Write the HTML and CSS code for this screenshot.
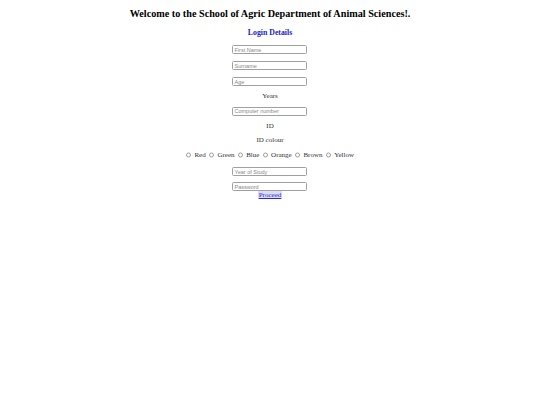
FILE: index.html
```html
<!DOCTYPE html>
<html>
<head>
<meta charset="utf-8">
<link rel="stylesheet" href="styles.css">
</head>
<body>
<div class="page">
  <h2 class="title">Welcome to the School of Agric Department of Animal Sciences!.</h2>
  <h3 class="subtitle">Login Details</h3>
  <form class="form">
    <input class="field f-first" type="text" placeholder="First Name">
    <input class="field f-gap" type="text" placeholder="Surname">
    <input class="field f-gap" type="text" placeholder="Age">
    <p class="label l-years">Years</p>
    <input class="field f-comp" type="text" placeholder="Computer number">
    <p class="label l-id">ID</p>
    <p class="label l-colour">ID colour</p>
    <div class="radios">
      <label class="opt"><input type="radio" name="c" class="radio">Red</label>
      <label class="opt"><input type="radio" name="c" class="radio">Green</label>
      <label class="opt"><input type="radio" name="c" class="radio">Blue</label>
      <label class="opt"><input type="radio" name="c" class="radio">Orange</label>
      <label class="opt"><input type="radio" name="c" class="radio">Brown</label>
      <label class="opt"><input type="radio" name="c" class="radio">Yellow</label>
    </div>
    <input class="field f-year" type="text" placeholder="Year of Study">
    <input class="field f-pass" type="password" placeholder="Password">
    <a class="proceed" href="#">Proceed</a>
  </form>
</div>
</body>
</html>
```

FILE: styles.css
```css
html, body {
  margin: 0;
  padding: 0;
  background: #ffffff;
}
body {
  font-family: "Liberation Serif", "Times New Roman", serif;
  font-size: 7px;
  color: #333;
}
.page {
  display: flex;
  flex-direction: column;
  align-items: center;
}
.title {
  margin: 8px 0 0 0;
  font-size: 10.2px;
  line-height: 12px;
  font-weight: bold;
  color: #000;
}
.subtitle {
  margin: 8px 0 0 0;
  font-size: 7.8px;
  line-height: 10px;
  font-weight: bold;
  color: #1a1acc;
}
.form {
  display: flex;
  flex-direction: column;
  align-items: center;
  margin: 0;
}
.field {
  box-sizing: border-box;
  width: 75px;
  height: 9px;
  margin: 0;
  padding: 0 1px;
  border: 1px solid #a0a0a0;
  border-radius: 1.5px;
  font-family: "Liberation Sans", Arial, sans-serif;
  font-size: 5.5px;
  line-height: 7px;
  outline: none;
  background: #fff;
}
.field::placeholder {
  color: #888;
}
.f-first { margin-top: 7px; }
.f-gap { margin-top: 7px; }
.f-comp { margin-top: 6.5px; }
.f-year { margin-top: 8px; }
.f-pass { margin-top: 6px; }
.label {
  margin: 0;
  line-height: 8px;
}
.l-years { margin-top: 6px; }
.l-id { margin-top: 6.5px; }
.l-colour { margin-top: 6px; }
.radios {
  display: flex;
  align-items: center;
  gap: 3.2px;
  margin-top: 7px;
  line-height: 8px;
}
.opt {
  display: flex;
  align-items: center;
}
.radio {
  width: 5.5px;
  height: 5.5px;
  margin: 0 3px 0 0;
  opacity: 0.7;
}
.proceed {
  color: #2a2ae0;
  text-decoration: underline;
  line-height: 8px;
  padding: 0 1px;
  background: #dcdcf6;
}
```
